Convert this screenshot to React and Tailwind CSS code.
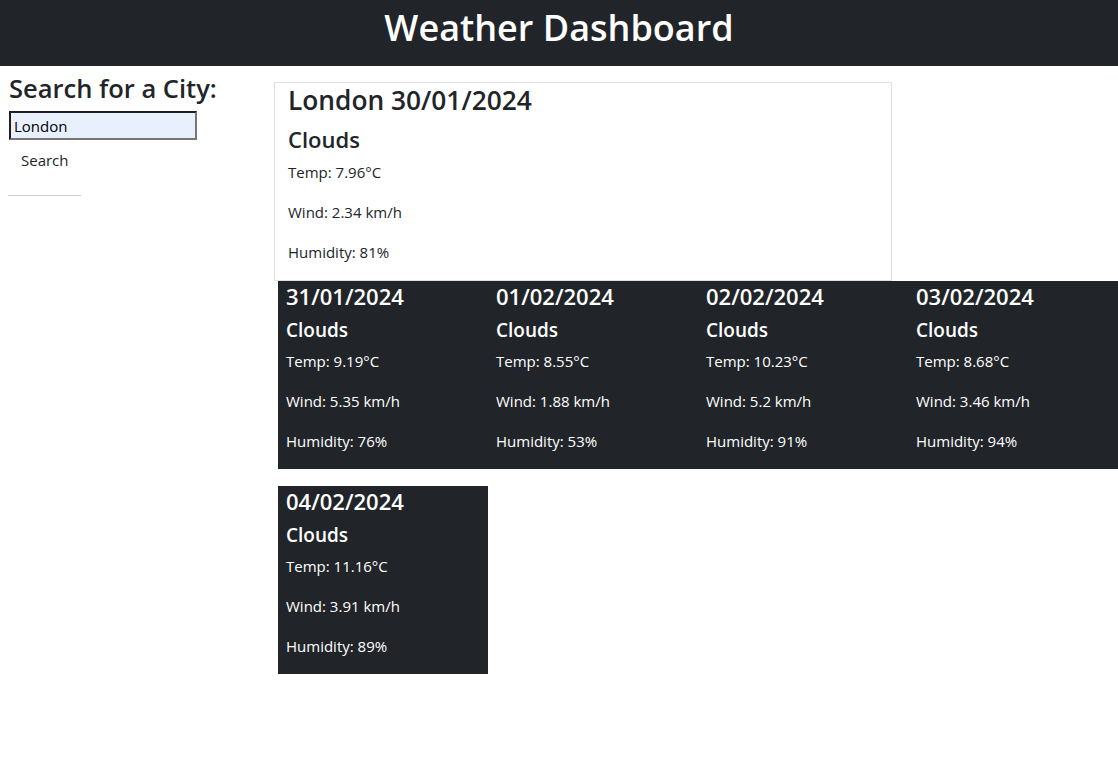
import React from "react";

const forecast = [
  { date: "31/01/2024", temp: "9.19", wind: "5.35", hum: "76" },
  { date: "01/02/2024", temp: "8.55", wind: "1.88", hum: "53" },
  { date: "02/02/2024", temp: "10.23", wind: "5.2", hum: "91" },
  { date: "03/02/2024", temp: "8.68", wind: "3.46", hum: "94" },
  { date: "04/02/2024", temp: "11.16", wind: "3.91", hum: "89" },
];

function ForecastCard({ f }) {
  return (
    <div className="w-[210px] bg-[#212529] text-white pl-[8px] pt-[1px] mb-[17px]">
      <h4 className="text-[22px] leading-[28px] font-semibold mb-[8px]">{f.date}</h4>
      <h5 className="text-[19px] leading-[24px] font-semibold mb-[7px]">Clouds</h5>
      <p className="text-[15px] leading-[24px] mb-[16px]">Temp: {f.temp}°C</p>
      <p className="text-[15px] leading-[24px] mb-[16px]">Wind: {f.wind} km/h</p>
      <p className="text-[15px] leading-[24px] mb-[16px]">Humidity: {f.hum}%</p>
    </div>
  );
}

export default function App() {
  return (
    <div className="min-h-[774px] bg-white text-[#212529]" style={{ fontFamily: '"Open Sans", "Noto Sans", sans-serif' }}>
      <header className="h-[66px] bg-[#212529] flex items-start justify-center pt-[5px]">
        <h1 className="text-[36px] leading-[46px] font-semibold text-white">Weather Dashboard</h1>
      </header>
      <div className="flex">
        <aside className="w-[274px] shrink-0 pl-[9px]">
          <h3 className="text-[25.5px] leading-[33px] font-semibold mt-[6px] mb-[6px]">Search for a City:</h3>
          <input
            defaultValue="London"
            className="block w-[188px] h-[29px] bg-[#e8f0fe] text-[15px] text-black pl-[3px] border-2 border-t-[#1e1e1e] border-l-[#1e1e1e] border-b-[#767676] border-r-[#767676] outline-none"
          />
          <button className="block text-[15px] leading-[24px] px-[12px] pt-[8px] pb-[6px] text-[#212529]">Search</button>
          <div className="w-[73px] h-px bg-[#cccccc] mt-[17px] -ml-[1px]"></div>
        </aside>
        <main className="flex-1 pt-[16px]">
          <div className="w-[618px] border border-[#dee2e6] pl-[13px] pt-[1px]">
            <h3 className="text-[26.3px] leading-[33px] font-semibold mb-[8px]">London 30/01/2024</h3>
            <h4 className="text-[22px] leading-[28.5px] font-semibold mb-[6px]">Clouds</h4>
            <p className="text-[15px] leading-[24px] mb-[16px]">Temp: 7.96°C</p>
            <p className="text-[15px] leading-[24px] mb-[16px]">Wind: 2.34 km/h</p>
            <p className="text-[15px] leading-[24px] mb-[16px]">Humidity: 81%</p>
          </div>
          <div className="flex flex-wrap pl-[4px]">
            {forecast.map((f) => (
              <ForecastCard key={f.date} f={f} />
            ))}
          </div>
        </main>
      </div>
    </div>
  );
}
